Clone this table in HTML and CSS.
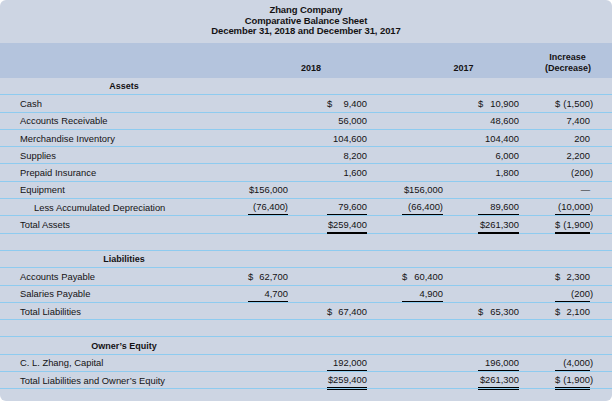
FILE: index.html
```html
<!DOCTYPE html>
<html>
<head>
<meta charset="utf-8">
<link rel="stylesheet" href="styles.css">
</head>
<body>
<div class="sheet">
  <div class="title">
    <div>Zhang Company</div>
    <div>Comparative Balance Sheet</div>
    <div>December 31, 2018 and December 31, 2017</div>
  </div>
  <div class="head">
    <div class="h18">2018</div>
    <div class="h17">2017</div>
    <div class="hinc">Increase<br>(Decrease)</div>
  </div>
  <div class="row"><div class="lbl sec">Assets</div></div>
  <div class="row">
    <div class="lbl">Cash</div>
    <div class="c b"><span class="cur">$</span>9,400</div>
    <div class="c d"><span class="cur">$</span>10,900</div>
    <div class="c e"><span class="cur">$</span>(1,500<span class="hp">)</span></div>
  </div>
  <div class="row">
    <div class="lbl">Accounts Receivable</div>
    <div class="c b">56,000</div>
    <div class="c d">48,600</div>
    <div class="c e">7,400</div>
  </div>
  <div class="row">
    <div class="lbl">Merchandise Inventory</div>
    <div class="c b">104,600</div>
    <div class="c d">104,400</div>
    <div class="c e">200</div>
  </div>
  <div class="row">
    <div class="lbl">Supplies</div>
    <div class="c b">8,200</div>
    <div class="c d">6,000</div>
    <div class="c e">2,200</div>
  </div>
  <div class="row">
    <div class="lbl">Prepaid Insurance</div>
    <div class="c b">1,600</div>
    <div class="c d">1,800</div>
    <div class="c e">(200<span class="hp">)</span></div>
  </div>
  <div class="row">
    <div class="lbl">Equipment</div>
    <div class="c a">$156,000</div>
    <div class="c c3">$156,000</div>
    <div class="c e">—</div>
  </div>
  <div class="row">
    <div class="lbl ind">Less Accumulated Depreciation</div>
    <div class="c a u">(76,400)</div>
    <div class="c b u">79,600</div>
    <div class="c c3 u">(66,400)</div>
    <div class="c d u">89,600</div>
    <div class="c e u">(10,000<span class="hp">)</span></div>
  </div>
  <div class="row">
    <div class="lbl">Total Assets</div>
    <div class="c b uu">$259,400</div>
    <div class="c d uu">$261,300</div>
    <div class="c e uu"><span class="cur">$</span>(1,900<span class="hp">)</span></div>
  </div>
  <div class="row"></div>
  <div class="row"><div class="lbl sec">Liabilities</div></div>
  <div class="row">
    <div class="lbl">Accounts Payable</div>
    <div class="c a"><span class="cur">$</span>62,700</div>
    <div class="c c3"><span class="cur">$</span>60,400</div>
    <div class="c e"><span class="cur">$</span>2,300</div>
  </div>
  <div class="row">
    <div class="lbl">Salaries Payable</div>
    <div class="c a u">4,700</div>
    <div class="c c3 u">4,900</div>
    <div class="c e u">(200<span class="hp">)</span></div>
  </div>
  <div class="row">
    <div class="lbl">Total Liabilities</div>
    <div class="c b"><span class="cur">$</span>67,400</div>
    <div class="c d"><span class="cur">$</span>65,300</div>
    <div class="c e"><span class="cur">$</span>2,100</div>
  </div>
  <div class="row"></div>
  <div class="row"><div class="lbl sec">Owner’s Equity</div></div>
  <div class="row">
    <div class="lbl">C. L. Zhang, Capital</div>
    <div class="c b u">192,000</div>
    <div class="c d u">196,000</div>
    <div class="c e u">(4,000<span class="hp">)</span></div>
  </div>
  <div class="row">
    <div class="lbl">Total Liabilities and Owner’s Equity</div>
    <div class="c b dbl">$259,400</div>
    <div class="c d dbl">$261,300</div>
    <div class="c e dbl"><span class="cur">$</span>(1,900<span class="hp">)</span></div>
  </div>
</div>
</body>
</html>
```

FILE: styles.css
```css
body {
  margin: 0;
  background: #ffffff;
  font-family: "Liberation Sans", Arial, sans-serif;
  color: #141213;
}

.sheet {
  width: 612px;
  height: 401px;
  background: #cdd5e3;
  border-radius: 6px;
  overflow: hidden;
}

.title {
  height: 43px;
  box-sizing: border-box;
  padding-top: 5px;
  text-align: center;
  font-weight: bold;
  font-size: 9.5px;
  line-height: 10.5px;
  letter-spacing: -0.1px;
}

.head,
.row {
  display: grid;
  grid-template-columns: [l] 248px [a] 40px [a-end] 39px [b] 40px [b-end] 35px [c] 41px [c-end] 35px [d] 41px [d-end] 36px [e] 35px [e-end] 1fr;
}

.head {
  height: 35px;
  box-sizing: border-box;
  background: #b4c4dd;
  align-items: end;
  padding-bottom: 4px;
  font-size: 9px;
  font-weight: bold;
  line-height: 11px;
  text-align: center;
}

.h18 {
  grid-column: a / b-end;
  padding-left: 7px;
}

.h17 {
  grid-column: c / d-end;
  padding-left: 6px;
}

.hinc {
  grid-column: d-end / e-end;
  padding-left: 26px;
}

.row {
  height: 17.3px;
  box-sizing: border-box;
  border-bottom: 1px solid #8ecbef;
  font-size: 9.4px;
}

.lbl {
  grid-column: l;
  padding-left: 20px;
  align-self: center;
  white-space: nowrap;
}

.ind {
  padding-left: 34px;
}

.sec {
  padding-left: 0;
  text-align: center;
  font-weight: bold;
  font-size: 9px;
}

.c {
  display: flex;
  justify-content: flex-end;
  align-items: center;
  white-space: nowrap;
}

.a { grid-column: a; }
.b { grid-column: b; }
.c3 { grid-column: c; }
.d { grid-column: d; }
.e { grid-column: e; }

.cur {
  margin-right: auto;
}

.hp {
  margin-right: -3px;
}

.u {
  border-bottom: 1px solid #000000;
}

.uu {
  border-bottom: 2px solid #000000;
  margin-bottom: -1px;
}

.dbl {
  border-bottom: 3px double #000000;
  margin-bottom: -2px;
}
```
